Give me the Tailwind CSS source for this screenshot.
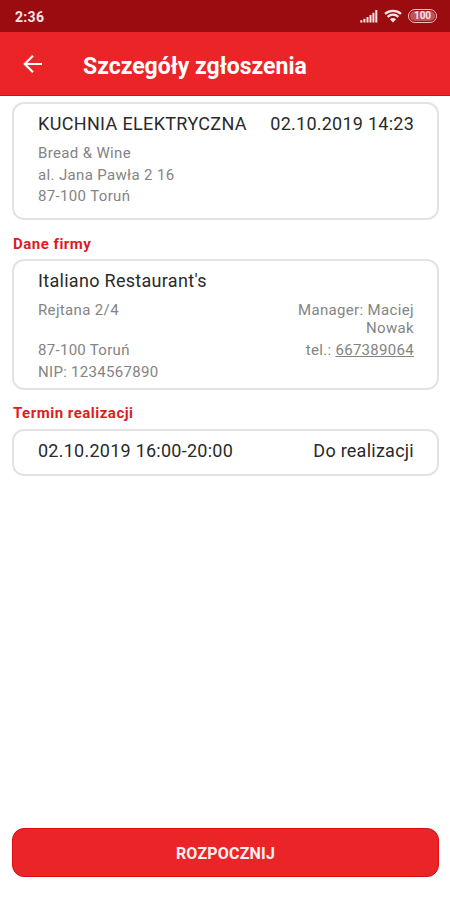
<!DOCTYPE html>
<html lang="pl">
<head>
  <meta charset="UTF-8">
  <meta name="viewport" content="width=device-width, initial-scale=1.0">
  <title>Szczegóły zgłoszenia</title>
  <script src="https://cdn.jsdelivr.net/npm/@tailwindcss/browser@4"></script>
</head>
<body class="bg-white font-['Roboto','Liberation_Sans',sans-serif] text-[#848484]">
  <div class="flex flex-col h-[900px] overflow-hidden">

    <!-- Status bar -->
    <div class="flex items-center justify-between h-8 shrink-0 bg-[#9b0c10] pl-[15px] pr-[13px] text-[#fbe3e3]">
      <span class="pt-0.5 text-sm font-bold tracking-[0.3px]">2:36</span>
      <div class="flex items-center">
        <svg class="w-[18px] h-[14px] mr-1.5" viewBox="0 0 18 14" fill="currentColor">
          <rect x="0.3" y="11.2" width="2" height="2.3"/>
          <rect x="3.4" y="9.8" width="2" height="3.7"/>
          <rect x="6.5" y="8" width="2" height="5.5"/>
          <rect x="9.5" y="6" width="2" height="7.5"/>
          <rect x="12.4" y="3.8" width="2" height="9.7"/>
          <rect x="15.3" y="1" width="2" height="12.5"/>
        </svg>
        <svg class="w-[18px] h-[14px] mr-1.5" viewBox="0 0 18 14" fill="none" stroke="currentColor" stroke-width="2.3">
          <path d="M1 4.8C5.6 0.8 12.4 0.8 17 4.8"/>
          <path d="M3.6 7.8C6.8 5 11.2 5 14.4 7.8"/>
          <path d="M5.9 10.2L9 13.6L12.1 10.2C10.2 8.7 7.8 8.7 5.9 10.2Z" fill="currentColor" stroke="none"/>
        </svg>
        <div class="flex items-center justify-center w-[29px] h-[14px] rounded-full border-[1.5px] border-[#f0c4c5] p-px">
          <span class="flex items-center justify-center w-full h-full rounded-full bg-[#f0c4c5]/40 text-[10px] leading-none font-bold">100</span>
        </div>
      </div>
    </div>

    <!-- App bar -->
    <div class="flex items-center h-16 shrink-0 bg-[#eb2427] border-b border-[#dc0c12] pl-[22px] text-white">
      <svg class="w-[22px] h-[20px]" viewBox="0 0 22 20" fill="none" stroke="currentColor" stroke-width="2.2">
        <path d="M20 10H3M11 1.8L2.8 10L11 18.2"/>
      </svg>
      <h1 class="ml-[39px] pt-[7px] text-[23px] font-bold">Szczegóły zgłoszenia</h1>
    </div>

    <div class="flex flex-col flex-1 px-3 pt-1.5 pb-[23px]">
      <!-- Request -->
      <div class="h-[118px] w-[427px] rounded-[12px] border-2 border-[#e2e3e3] pl-6 pr-[23px] pt-2">
        <div class="flex justify-between text-[18px] leading-6 text-[#2a2a2a]">
          <span class="tracking-[0.35px]">KUCHNIA ELEKTRYCZNA</span>
          <span class="tracking-[0.25px]">02.10.2019 14:23</span>
        </div>
        <div class="mt-[7px] text-[15px] leading-[21.7px] tracking-[0.35px]">
          <p>Bread &amp; Wine</p>
          <p>al. Jana Pawła 2 16</p>
          <p>87-100 Toruń</p>
        </div>
      </div>

      <!-- Company -->
      <h2 class="h-[39px] pl-px pt-[13px] text-[15px] leading-[22px] font-bold tracking-[0.5px] text-[#dd1c22]">Dane firmy</h2>
      <div class="h-[131px] w-[427px] rounded-[12px] border-2 border-[#e2e3e3] pl-6 pr-[23px] pt-2">
        <p class="text-[18px] leading-6 tracking-[0.3px] text-[#2a2a2a]">Italiano Restaurant's</p>
        <div class="flex justify-between mt-2 h-[39px] text-[15px] leading-[18px] tracking-[0.35px]">
          <p>Rejtana 2/4</p>
          <p class="w-[130px] text-right">Manager: Maciej Nowak</p>
        </div>
        <div class="flex justify-between text-[15px] leading-[21.7px] tracking-[0.3px]">
          <p>87-100 Toruń</p>
          <p>tel.: <a class="underline">667389064</a></p>
        </div>
        <p class="text-[15px] leading-[21.7px] tracking-[0.3px]">NIP: 1234567890</p>
      </div>

      <!-- Schedule -->
      <h2 class="h-[39px] pl-px pt-[12px] text-[15px] leading-[22px] font-bold tracking-[0.5px] text-[#dd1c22]">Termin realizacji</h2>
      <div class="flex justify-between h-[47px] w-[427px] rounded-[12px] border-2 border-[#e2e3e3] pl-6 pr-[23px] pt-2 text-[18px] leading-6 tracking-[0.25px] text-[#2a2a2a]">
        <span>02.10.2019 16:00-20:00</span>
        <span>Do realizacji</span>
      </div>

      <button class="mt-auto h-[49px] w-[427px] rounded-[12px] border border-[#dc0c12] bg-[#eb2427] pt-[3px] text-base font-bold tracking-[0.2px] text-[#fff0f0]">ROZPOCZNIJ</button>
    </div>
  </div>
</body>
</html>
